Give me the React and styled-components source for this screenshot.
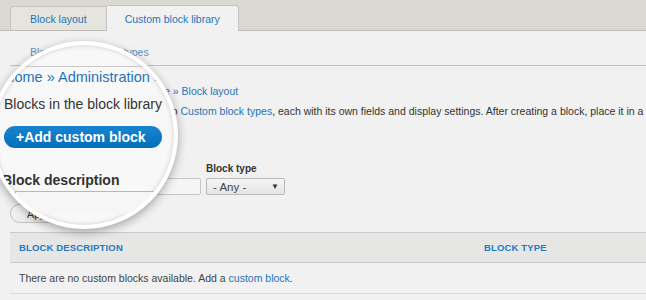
import React from 'react'
import styled, { createGlobalStyle } from 'styled-components'

const Global = createGlobalStyle`
  body {
    margin: 0;
    background: #f1f1f1;
    font-family: "Liberation Sans", Arial, sans-serif;
    color: #333;
  }
`

const Page = styled.div`
  position: relative;
  width: 646px;
  height: 300px;
  overflow: hidden;
  background: #f1f1f1;
`

const TopBar = styled.div`
  height: 30px;
  background: #d9d8d3;
  border-bottom: 1px solid #bebdb8;
  display: flex;
  align-items: flex-end;
  padding-left: 10px;
`

const Tab = styled.div`
  box-sizing: border-box;
  height: ${p => (p.active ? '26px' : '24px')};
  margin-bottom: ${p => (p.active ? '-1px' : '0')};
  padding: 0 ${p => (p.active ? '18px' : '19px')};
  background: ${p => (p.active ? '#f1f1f1' : '#e5e4df')};
  border: 1px solid #c4c3bd;
  border-bottom: none;
  border-radius: ${p => (p.active ? '0 4px 0 0' : '4px 0 0 0')};
  border-left: ${p => (p.active ? 'none' : '1px solid #c4c3bd')};
  display: flex;
  align-items: center;
  font-size: 10.5px;
  color: #1f74b8;
`

const Content = styled.div`
  padding-left: 10px;
`

const SubTabs = styled.div`
  height: 35px;
  border-bottom: 1px solid #c2c2c2;
  display: flex;
  align-items: flex-end;
  gap: 34px;
  padding: 0 0 7px 20px;
  box-sizing: border-box;
  font-size: 10.5px;
  color: #5d8fc0;
`

const Crumbs = styled.div`
  margin-top: 18px;
  font-size: 10.5px;
  line-height: 14px;
  color: #1f74b8;
`

const Lead = styled.p`
  margin: 6px 0 0 3px;
  font-size: 10.5px;
  line-height: 14px;
  white-space: nowrap;
`

const Link = styled.a`
  color: #1f74b8;
  text-decoration: none;
`

const Filters = styled.div`
  display: flex;
  align-items: flex-end;
  gap: 5px;
  margin-top: 45px;
`

const Field = styled.div`
  display: flex;
  flex-direction: column;
  gap: 4px;
`

const Label = styled.label`
  font-size: 10px;
  font-weight: bold;
  color: #333;
`

const TextInput = styled.div`
  box-sizing: border-box;
  width: 191px;
  height: 17px;
  background: #f5f5f5;
  border: 1px solid #c7c7c7;
  border-radius: 2px;
`

const Select = styled.div`
  box-sizing: border-box;
  width: 79px;
  height: 17px;
  padding: 0 5px 0 6px;
  display: flex;
  align-items: center;
  justify-content: space-between;
  background: linear-gradient(#f6f6f6, #e4e4e4);
  border: 1px solid #b9b9b9;
  border-radius: 2px;
  font-size: 11.5px;
  color: #444;
`

const Caret = styled.span`
  font-size: 8px;
  color: #333;
`

const Button = styled.div`
  box-sizing: border-box;
  display: inline-flex;
  align-items: center;
  height: 19px;
  margin-top: 9px;
  padding: 0 16px;
  border: 1px solid #c2c2c2;
  border-radius: 10px;
  background: linear-gradient(#f7f7f7, #ececec);
  font-size: 10.5px;
  color: #333;
`

const Table = styled.div`
  margin-top: 9px;
  width: 700px;
`

const Row = styled.div`
  display: grid;
  grid-template-columns: 465px 1fr;
  align-items: center;
  height: ${p => (p.head ? '29px' : '30px')};
  background: ${p => (p.head ? '#e6e6e4' : 'transparent')};
  border-top: ${p => (p.head ? '1px solid #c9c9c7' : 'none')};
  border-bottom: 1px solid ${p => (p.head ? '#c9c9c7' : '#dcdcdc')};
`

const Cell = styled.div`
  padding: 0 9px;
  font-size: ${p => (p.head ? '9.5px' : '10.5px')};
  font-weight: ${p => (p.head ? 'bold' : 'normal')};
  letter-spacing: ${p => (p.head ? '0.15px' : '0')};
  text-transform: ${p => (p.head ? 'uppercase' : 'none')};
  color: ${p => (p.head ? '#1f7ac2' : '#444')};
  white-space: nowrap;
`

/* magnifier lens laid over the page */
const Lens = styled.div`
  position: absolute;
  left: -10px;
  top: 41px;
  width: 188px;
  height: 188px;
  box-sizing: border-box;
  border-radius: 50%;
  overflow: hidden;
  background: #f8f8f8;
  border: 4px solid rgba(255, 255, 255, 0.92);
  box-shadow: 0 3px 10px rgba(0, 0, 0, 0.32), inset 0 0 5px rgba(0, 0, 0, 0.18);
`

const LensRule = styled.div`
  margin-top: 21px;
  border-top: 1px solid #c6c6c6;
  width: 300px;
`

const LensInner = styled.div`
  padding-left: 10px;
`

const LensCrumbs = styled.div`
  margin-top: 1px;
  font-size: 14.5px;
  line-height: 18px;
  color: #1f74b8;
  white-space: nowrap;
`

const LensLead = styled.div`
  margin-top: 9px;
  font-size: 14px;
  line-height: 18px;
  color: #333;
  white-space: nowrap;
`

const LensButton = styled.div`
  box-sizing: border-box;
  width: 158px;
  height: 22px;
  margin-top: 13px;
  border-radius: 12px;
  background: linear-gradient(#1a83cf, #0070bb);
  color: #fff;
  font-size: 14px;
  font-weight: bold;
  display: flex;
  align-items: center;
  padding-left: 12px;
`

const LensLabel = styled.div`
  margin: 23px 0 0 -2px;
  font-size: 14px;
  line-height: 18px;
  font-weight: bold;
  color: #333;
`

const LensInput = styled.div`
  margin: 2px 0 0 11px;
  width: 220px;
  height: 22px;
  border-top: 1px solid #b8b8b8;
  border-left: 1px solid #b8b8b8;
  background: #f6f6f6;
`

export default function App() {
  return (
    <Page>
      <Global />
      <TopBar>
        <Tab>Block layout</Tab>
        <Tab active>Custom block library</Tab>
      </TopBar>
      <Content>
        <SubTabs>
          <span>Blocks</span>
          <span>Block types</span>
        </SubTabs>
        <Crumbs>Home » Administration » Structure » Block layout</Crumbs>
        <Lead>
          Blocks in the block library belong to <Link>Custom block types</Link>, each with its own fields and display
          settings. After creating a block, place it in a region from the <Link>Block layout</Link> page.
        </Lead>
        <Filters>
          <Field>
            <Label>Block description</Label>
            <TextInput />
          </Field>
          <Field>
            <Label>Block type</Label>
            <Select>
              <span>- Any -</span>
              <Caret>▼</Caret>
            </Select>
          </Field>
        </Filters>
        <Button>Apply</Button>
        <Table>
          <Row head>
            <Cell head>Block description</Cell>
            <Cell head>Block type</Cell>
          </Row>
          <Row>
            <Cell>
              There are no custom blocks available. Add a <Link>custom block</Link>.
            </Cell>
            <Cell />
          </Row>
        </Table>
      </Content>
      <Lens>
        <LensRule />
        <LensInner>
          <LensCrumbs>Home » Administration »</LensCrumbs>
          <LensLead>Blocks in the block library</LensLead>
          <LensButton>+Add custom block</LensButton>
          <LensLabel>Block description</LensLabel>
          <LensInput />
        </LensInner>
      </Lens>
    </Page>
  )
}
